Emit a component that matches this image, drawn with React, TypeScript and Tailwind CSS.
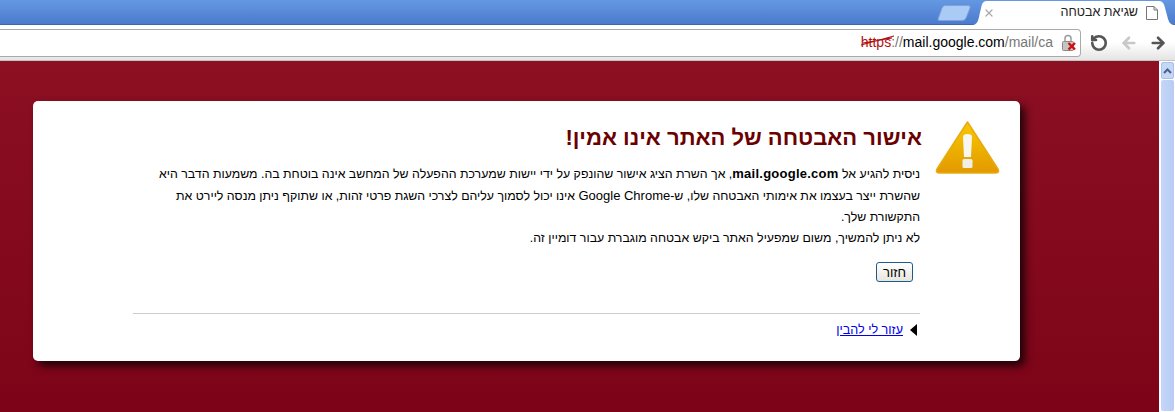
import { ArrowLeft, ArrowRight, RotateCcw, X } from 'lucide-react';

function WarningIcon() {
  return (
    <svg width="65" height="56" viewBox="0 0 65 56" className="mt-[-1px] shrink-0">
      <defs>
        <linearGradient id="warn" x1="0" y1="0" x2="0" y2="1">
          <stop offset="0" stopColor="#f8c800" />
          <stop offset="1" stopColor="#e29a00" />
        </linearGradient>
      </defs>
      <path d="M32.5 2 L63 49 Q65 53 60 53 L5 53 Q0 53 2 49 Z" fill="url(#warn)" stroke="#e8aa10" strokeWidth="1.5" strokeLinejoin="round" />
      <path d="M28 17 Q28 14 32.5 14 Q37 14 37 17 L36 37 L29 37 Z" fill="#f8f6f0" />
      <rect x="27.5" y="39" width="10" height="9" rx="1.5" fill="#f0eee6" />
    </svg>
  );
}

function LockError() {
  return (
    <svg width="16" height="18" viewBox="0 0 16 18">
      <rect x="1.5" y="7.5" width="11" height="9" rx="1" fill="#c4c4c0" stroke="#8a8a8a" />
      <path d="M4 7.5V4.5a3 3 0 0 1 6 0v3" fill="none" stroke="#9a9a9a" strokeWidth="1.5" />
      <path d="M7.5 9l6.5 6.5m0-6.5l-6.5 6.5" stroke="#d01010" strokeWidth="2.4" />
    </svg>
  );
}

function TabShape() {
  return (
    <svg width="203" height="25" viewBox="0 0 203 25" className="absolute left-0 top-0">
      <path d="M0 25 Q5 25 6.500 19 L9.500 6 Q10.500 1 15 1 L187 1 Q191 1 192.500 6 L196 19 Q197.500 25 203 25 Z" fill="#ffffff" />
    </svg>
  );
}

export default function App() {
  return (
    <div className="flex h-[412px] w-[1175px] flex-col overflow-hidden font-['Liberation_Sans',sans-serif]">
      {/* tab strip */}
      <div className="flex h-[25px] shrink-0 items-start justify-end border-b border-[#3f66a8] bg-gradient-to-b from-[#6598e2] to-[#4b7bce]">
        <svg width="36" height="16" viewBox="0 0 36 16" className="mr-[-1px] mt-[5px]">
          <path d="M8 .5 L31 .5 Q34 .5 33 3 L29 13 Q28 15.500 25 15.500 L3 15.500 Q0 15.500 1.500 13 L5 3 Q6 .5 8 .5 Z" fill="#a9cbf6" stroke="#7fa3d8" />
        </svg>
        <div dir="rtl" className="relative flex h-[25px] w-[203px] items-center pr-[17px]">
          <TabShape />
          <svg width="12" height="14" viewBox="0 0 12 14" className="relative">
            <path d="M.5.5H8L11.500 4V13.500H.5Z" fill="#fff" stroke="#777" />
            <path d="M8 .5V4H11.500" fill="none" stroke="#777" />
          </svg>
          <span className="relative mr-[8px] whitespace-nowrap text-[12.6px] text-[#222]">שגיאת אבטחה</span>
          <X size={12} strokeWidth={2.5} className="absolute left-[11px] top-[7px] text-[#aaaaaa]" />
        </div>
      </div>
      <div className="flex h-[36px] shrink-0 items-center justify-end border-b border-[#c4c4c4] bg-gradient-to-b from-white via-white to-[#e4e4e4]">
        <div className="relative flex h-[28px] flex-1 items-center justify-end rounded-r-[4px] border border-l-0 border-[#a9a9a9] bg-white pr-[27px] text-[14px]">
          <span dir="ltr" className="relative whitespace-nowrap text-[#777]">
            <span className="text-[#b01010]">https</span>://<span className="text-black">mail.google.com</span>/mail/ca
            <svg width="34" height="12" viewBox="0 0 34 12" className="absolute left-0 top-[3px]">
              <path d="M0 10L33 1M2 8L31 3" stroke="#b01010" strokeWidth="1.200" fill="none" />
            </svg>
          </span>
          <span className="absolute right-[3px] top-[4px]">
            <LockError />
          </span>
        </div>
        <div className="flex w-[94px] items-center justify-between pl-[9px] pr-[8px] text-[#555]">
          <RotateCcw size={18} strokeWidth={3.5} />
          <ArrowLeft size={18} strokeWidth={3.5} className="text-[#c8c8c8]" />
          <ArrowRight size={18} strokeWidth={3.5} />
        </div>
      </div>
      {/* page */}
      <div className="flex min-h-0 flex-1">
        <div className="flex-1 bg-gradient-to-b from-[#8c0f22] to-[#7d0418] pl-[33px] pt-[40px]">
          <div className="flex h-[260px] w-[987px] rounded-[5px] bg-white pl-[100px] pr-[20px] pt-[20px] shadow-[5px_5px_9px_rgba(0,0,0,0.75)]" dir="rtl">
            <WarningIcon />
            <div className="mr-[13px] flex-1 pt-[2px]">
              <h1 className="text-[22px] font-bold leading-[30px] text-[#6b0000]">אישור האבטחה של האתר אינו אמין!</h1>
              <div className="mr-[2px] mt-[10px] text-[12.35px] leading-[21px] text-black">
                <p className="whitespace-nowrap">ניסית להגיע אל <b className="text-[13px] tracking-[0.25px]">mail.google.com</b>, אך השרת הציג אישור שהונפק על ידי יישות שמערכת ההפעלה של המחשב אינה בוטחת בה. משמעות הדבר היא</p>
                <p className="whitespace-nowrap">שהשרת ייצר בעצמו את אימותי האבטחה שלו, ש-<span className="text-[13px]">Google Chrome</span> אינו יכול לסמוך עליהם לצרכי השגת פרטי זהות, או שתוקף ניתן מנסה ליירט את</p>
                <p>התקשורת שלך.</p>
                <p>לא ניתן להמשיך, משום שמפעיל האתר ביקש אבטחה מוגברת עבור דומיין זה.</p>
              </div>
              <button className="mr-[9px] mt-[13px] block h-[20px] w-[37px] rounded-[3px] border border-[#1f5a8c] bg-gradient-to-b from-white to-[#e8e6dc] text-[13px] leading-none text-black">חזור</button>
              <div className="mr-[2px] mt-[31px] h-px bg-[#cccccc]" />
              <div className="mr-[5px] mt-[7px] flex items-center gap-[7px] text-[12.6px]">
                <span className="h-0 w-0 border-y-[6px] border-r-[7px] border-y-transparent border-r-black" />
                <a className="text-[#0000ee] underline" href="#">עזור לי להבין</a>
              </div>
            </div>
          </div>
        </div>
        <div className="flex w-[16px] shrink-0 flex-col gap-px border-l border-white bg-white p-px">
          <div className="flex h-[17px] items-center justify-center rounded-[2px] border border-[#a9c0ea] bg-[#c5d7f7] text-[#4d6185]">
            <svg width="9" height="6" viewBox="0 0 9 6"><path d="M1 5l3.5-3.5L8 5" fill="none" stroke="currentColor" strokeWidth="2" /></svg>
          </div>
          <div className="flex-1 rounded-[2px] bg-gradient-to-r from-[#c4d6f8] to-[#b8ccf4]" />
        </div>
      </div>
    </div>
  );
}
